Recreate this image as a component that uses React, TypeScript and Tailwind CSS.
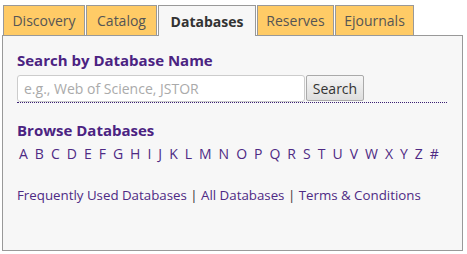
import React, { useState } from 'react';

const tabs = [
  { name: 'Discovery', w: 'w-[82px]' },
  { name: 'Catalog', w: 'w-[71px]' },
  { name: 'Databases', w: 'w-[98px]' },
  { name: 'Reserves', w: 'w-[77px]' },
  { name: 'Ejournals', w: 'w-[79px]' },
];

const letters = 'A B C D E F G H I J K L M N O P Q R S T U V W X Y Z #'.split(' ');

export default function App() {
  const [active, setActive] = useState('Databases');
  const [q, setQ] = useState('');

  return (
    <div className="w-[467px] h-[254px] bg-white pt-[5px] font-['Open_Sans',sans-serif]">
      <div className="flex gap-[1px] ml-[3px] relative z-10">
        {tabs.map(t => (
          <button
            key={t.name}
            onClick={() => setActive(t.name)}
            className={`${t.w} border border-[#999] border-b-0 text-[14px] flex items-center justify-center ${
              active === t.name
                ? 'h-[31px] bg-[#f7f7f7] font-bold text-[#333]'
                : 'h-[30px] bg-[#ffcb66] text-[#555]'
            }`}
          >
            {t.name}
          </button>
        ))}
      </div>

      <div className="ml-[2px] w-[461px] h-[216px] -mt-px border border-[#999] bg-[#f7f7f7] pl-[14px] pt-[14px]">
        <h2 className="text-[15px] font-bold text-[#4b2382] leading-[20px]">Search by Database Name</h2>
        <form
          onSubmit={e => e.preventDefault()}
          className="flex w-[430px] mt-[5px] border-b border-dotted border-[#3a1f73]"
        >
          <input
            value={q}
            onChange={e => setQ(e.target.value)}
            placeholder="e.g., Web of Science, JSTOR"
            className="w-[288px] h-[27px] border border-[#ccc] rounded-[3px] bg-white px-[6px] text-[14px] text-[#333] placeholder:text-[#aaa] outline-none"
          />
          <button className="ml-px w-[58px] h-[26px] border border-[#aaa] rounded-[2px] bg-gradient-to-b from-[#f6f6f6] to-[#dedede] text-[14px] text-[#333]">
            Search
          </button>
        </form>

        <h2 className="mt-[17px] text-[15px] font-bold text-[#4b2382] leading-[20px]">Browse Databases</h2>
        <div className="flex gap-[7px] mt-[4px] pl-[2px] text-[14px] text-[#4e2a84] leading-[20px]">
          {letters.map(l => (
            <a key={l} href="#" className="hover:underline">{l}</a>
          ))}
        </div>

        <div className="mt-[21px] text-[13.3px] text-[#4e2a84] leading-[20px]">
          <a href="#">Frequently Used Databases</a>
          <span className="text-[#333]"> | </span>
          <a href="#">All Databases</a>
          <span className="text-[#333]"> | </span>
          <a href="#">Terms &amp; Conditions</a>
        </div>
      </div>
    </div>
  );
}
